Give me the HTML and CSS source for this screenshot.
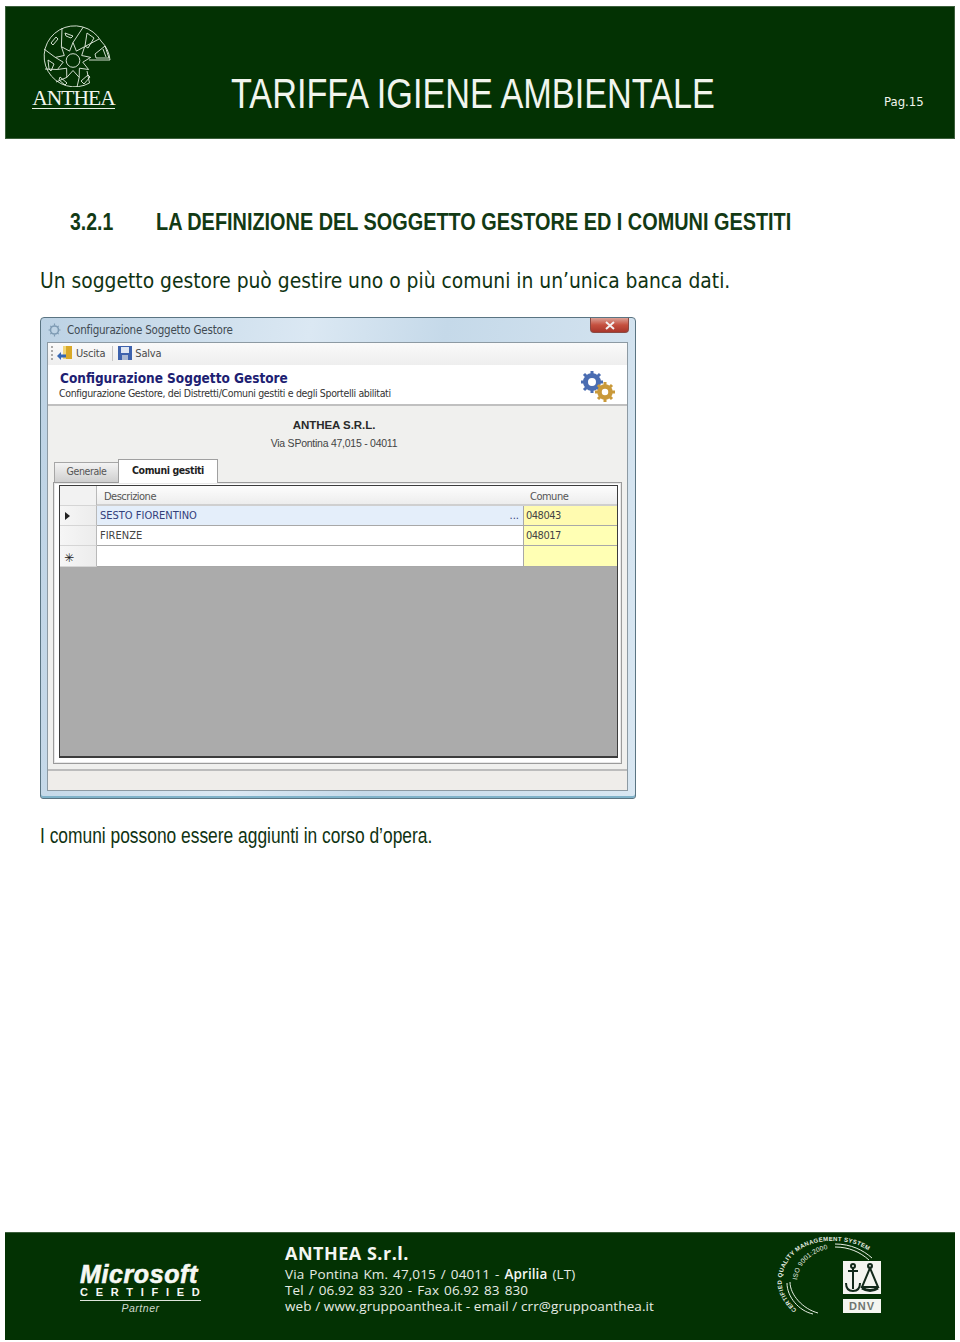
FILE: index.html
```html
<!DOCTYPE html>
<html lang="it">
<head>
<meta charset="utf-8">
<title>Tariffa Igiene Ambientale</title>
<link rel="stylesheet" href="styles.css">
</head>
<body>
<div class="page">
  <header class="banner">
    <div class="brand">
      <svg class="brand-mark" viewBox="0 0 70 62" width="70" height="62" fill="none" stroke="#e8efe4" stroke-width="0.9">
        <path d="M46.500 58 A30.500 30.500 0 1 1 58 16 Q66 24 67 35 L46 35"/>
        <path d="M46.500 58 L44 46"/>
        <circle cx="30" cy="35.500" r="6.800"/>
        <path d="M30 17.500 L33.400 26.100 L41.600 21.700 L38.700 30.500 L47.700 32.400 L39.800 37.200 L45.600 44.500 L36.400 43.200 L36.200 52.400 L30 45.500 L23.800 52.400 L23.600 43.200 L14.400 44.500 L20.200 37.200 L12.300 32.400 L21.300 30.500 L18.400 21.700 L26.600 26.100 Z"/>
        <path d="M30 17.500 L40.300 2 M41.600 21.700 L56 14 M36.200 52.400 L34 62 M23.800 52.400 L13 57 M14.400 44.500 L2 44 M12.300 32.400 L1 24 M18.400 21.700 L19 3"/>
        <path d="M22 8 L30 11 L28 13 L23 11 Z M44 8 L51 13 L45 23 L42 21 Z M52 29 L62 21 L66 33 L53 33 Z M60 24 L63 32 M8 18 L13 12 L15 14 L10 20 Z M5 35 L11 39 L8 46 L6 44 Z M17 52 L24 58 L22 60 L16 55 Z M38 56 L45 50 L47 52 L41 59 Z"/>
      </svg>
      <span class="brand-name">ANTHEA</span>
    </div>
    <h1 class="banner-title"><span class="banner-title-text">TARIFFA IGIENE AMBIENTALE</span></h1>
    <span class="banner-page">Pag.15</span>
  </header>

  <main class="content">
    <h2 class="section-title"><span class="section-num"><span class="section-num-text">3.2.1</span></span><span class="section-text">LA DEFINIZIONE DEL SOGGETTO GESTORE ED I COMUNI GESTITI</span></h2>
    <p class="lead">Un soggetto gestore può gestire uno o più comuni in un’unica banca dati.</p>

    <div class="window">
      <div class="win-title">
        <svg class="win-icon" viewBox="0 0 14 14" width="14" height="14" fill="none" stroke="#7f9cb4" stroke-width="1.600"><circle cx="6.500" cy="7" r="4"/><path d="M6.500 0.500v2M6.500 11.500v2M0.500 7h2M10.500 7h2M2.300 2.800l1.400 1.400M9.300 9.800l1.400 1.400M2.300 11.200l1.400-1.400M9.300 4.200l1.400-1.400" stroke-width="1.200"/></svg>
        <span class="win-title-text">Configurazione Soggetto Gestore</span>
        <span class="win-close">
          <svg viewBox="0 0 12 9" width="12" height="9" fill="none" stroke="#f4f0f0" stroke-width="2"><path d="M2 1l8 7M10 1L2 8"/></svg>
        </span>
      </div>
      <div class="win-client">
        <div class="toolbar">
          <span class="grip"></span>
          <svg class="tool-icon" viewBox="0 0 16 15" width="16" height="15"><rect x="6" y="0" width="9" height="13" fill="#d9a928"/><rect x="6" y="0" width="3" height="13" fill="#f2d77a"/><path d="M0 10l4-4v2.500h5v3H4V14z" fill="#3467b4"/></svg>
          <span class="tool-label">Uscita</span>
          <span class="tool-sep"></span>
          <svg class="tool-icon" viewBox="0 0 14 14" width="14" height="14"><rect width="14" height="14" fill="#3d62ad"/><rect x="3" y="1" width="8" height="6" fill="#dfe7f3"/><rect x="4" y="9" width="6" height="5" fill="#a9b8d3"/></svg>
          <span class="tool-label tool-label-save">Salva</span>
        </div>
        <div class="win-head">
          <div class="win-head-text">
            <div class="win-head-title">Configurazione Soggetto Gestore</div>
            <div class="win-head-sub">Configurazione Gestore, dei Distretti/Comuni gestiti e degli Sportelli abilitati</div>
          </div>
          <svg class="gears" viewBox="0 0 36 32" width="36" height="32" fill="none">
            <circle cx="13" cy="11" r="6.500" stroke="#4a6db2" stroke-width="5"/>
            <path d="M13 0v4M13 18v4M2 11h4M20 11h4M5 3l3 3M18 16l3 3M21 3l-3 3M8 16l-3 3" stroke="#4a6db2" stroke-width="3"/>
            <circle cx="26" cy="21" r="5.500" stroke="#c9993a" stroke-width="4.500"/>
            <path d="M26 11v3M26 28v3M16 21h3M33 21h3M19 14l2 2M31 26l2 2M33 14l-2 2M21 26l-2 2" stroke="#c9993a" stroke-width="3"/>
          </svg>
        </div>
        <div class="company">
          <div class="company-name">ANTHEA S.R.L.</div>
          <div class="company-addr">Via SPontina 47,015 - 04011</div>
        </div>
        <div class="tabs">
          <span class="tab">Generale</span>
          <span class="tab tab-active">Comuni gestiti</span>
        </div>
        <div class="tab-panel">
          <div class="grid">
            <div class="grid-row grid-row-head">
              <div class="cell-mark"></div>
              <div class="cell-name">Descrizione</div>
              <div class="cell-code">Comune</div>
            </div>
            <div class="grid-row grid-row-selected">
              <div class="cell-mark"><span class="arrow"></span></div>
              <div class="cell-name">SESTO FIORENTINO<span class="ellipsis">...</span></div>
              <div class="cell-code">048043</div>
            </div>
            <div class="grid-row">
              <div class="cell-mark"></div>
              <div class="cell-name">FIRENZE</div>
              <div class="cell-code">048017</div>
            </div>
            <div class="grid-row grid-row-new">
              <div class="cell-mark"><span class="star">✳</span></div>
              <div class="cell-name"></div>
              <div class="cell-code"></div>
            </div>
            <div class="grid-empty"></div>
          </div>
        </div>
        <div class="status"></div>
      </div>
    </div>

    <p class="note"><span class="note-text">I comuni possono essere aggiunti in corso d’opera.</span></p>
  </main>

  <footer class="footer">
    <div class="ms">
      <div class="ms-word">Microsoft</div>
      <div class="ms-cert">CERTIFIED</div>
      <div class="ms-partner">Partner</div>
    </div>
    <div class="contact">
      <div class="contact-name">ANTHEA S.r.l.</div>
      <div class="contact-wide">Via Pontina Km. 47,015 / 04011 - <b>Aprilia</b> (LT)</div>
      <div class="contact-wide">Tel / 06.92 83 320 - Fax 06.92 83 830</div>
      <div>web / www.gruppoanthea.it - email / crr@gruppoanthea.it</div>
    </div>
    <svg class="cert" viewBox="0 0 110 84" width="110" height="84">
      <defs>
        <path id="ring-outer" d="M22 77 C10 66 5 54 7 44 C10 22 32 7 58 8 C70 8 82 10 94 18"/>
        <path id="ring-inner" d="M22 47 C24 30 38 17 59 15"/>
      </defs>
      <text class="cert-text"><textPath href="#ring-outer">CERTIFIED QUALITY MANAGEMENT SYSTEM</textPath></text>
      <text class="cert-text cert-text-iso"><textPath href="#ring-inner">ISO 9001:2000</textPath></text>
      <g fill="none" stroke="#e8efe4" stroke-width="1">
        <path d="M15 49 C15 62 28 76 43 80"/>
        <path d="M12 50 C12 64 24 78 38 81"/>
        <path d="M60 14 C74 14 85 19 94 27"/>
        <path d="M60 11 C76 11 88 17 97 25"/>
      </g>
      <rect x="68" y="28" width="38" height="33" fill="#f4f5f0"/>
      <g fill="none" stroke="#12291a" stroke-width="2">
        <circle cx="78" cy="33" r="2"/>
        <path d="M78 35v21M73 38h10M71 50q0 8 7 8q7 0 7-8"/>
        <circle cx="95" cy="33" r="2"/>
        <path d="M95 35l-8 19h16z"/>
        <path d="M87 55q8 5 16 0" stroke-width="3"/>
      </g>
      <rect x="68" y="66" width="38" height="14" fill="#f4f5f0"/>
      <text class="cert-dnv" x="87" y="77" text-anchor="middle">DNV</text>
    </svg>
  </footer>
</div>
</body>
</html>
```
FILE: styles.css
```css
* { box-sizing: border-box; }
html, body { margin: 0; padding: 0; background: #fff; }
body { font-family: "Liberation Sans", Arial, sans-serif; color: #0f3312; }
.page { width: 960px; height: 1342px; padding: 6px 5px 2px; display: flex; flex-direction: column; }

.banner { height: 133px; background: #033203; border: 1px solid #3c5f3c; display: flex; flex: none; color: #f1f5ee; padding-left: 27px; }
.brand { width: 84px; margin-top: 18px; display: flex; flex-direction: column; align-items: center; }
.brand-mark { display: block; margin-left: 6px; }
.brand-name { font: 21.500px/20px "Liberation Serif", serif; letter-spacing: -1px; border-bottom: 1px solid #e8efe4; margin-top: 1px; height: 21px; margin-left: -3px; white-space: nowrap; }
.banner-title { font: 400 42px/1 "Liberation Sans", sans-serif; margin: 66px 0 0 114px; width: 653px; white-space: nowrap; }
.banner-title-text { display: inline-block; transform: scaleX(0.815); transform-origin: left; }
.banner-page { font: 13px/1 Tahoma, "DejaVu Sans Condensed", "DejaVu Sans", sans-serif; margin-top: 88px; }

.content { flex: 1; min-height: 0; padding: 69px 0 0 35px; }
.section-title { margin: 0 0 0 30px; display: flex; font: bold 24px/28px "Liberation Sans", sans-serif; white-space: nowrap; color: #123a14; }
.section-num { width: 86px; flex: none; }
.section-num-text { display: inline-block; transform: scaleX(0.81); transform-origin: left; }
.section-text { display: inline-block; transform: scaleX(0.828); transform-origin: left; }
.lead { margin: 32px 0 0; font: 20.800px/26px "DejaVu Sans Condensed", "DejaVu Sans", sans-serif; white-space: nowrap; }
.note { margin: 24px 0 0; font: 22px/26px "Liberation Sans", sans-serif; white-space: nowrap; }
.note-text { display: inline-block; transform: scaleX(0.79); transform-origin: left; }

.window { width: 596px; height: 482px; margin-top: 23px; padding: 0 7px 7px 6px; border: 1px solid #5a7482; border-radius: 4px 4px 3px 3px; background: linear-gradient(100deg, #bcd2e4 0%, #dbe8f3 40%, #c5d9e9 60%, #d9e7f2 100%); display: flex; flex-direction: column; color: #333; font-family: Tahoma, "DejaVu Sans Condensed", "DejaVu Sans", sans-serif; box-shadow: inset 0 -2px 0 #7fb2c9; }
.win-title { height: 24px; flex: none; display: flex; align-items: center; margin-left: 1px; }
.win-icon { margin-right: 5px; }
.win-title-text { font-size: 11.500px; color: #3f4a52; letter-spacing: -0.200px; }
.win-close { margin-left: auto; margin-top: -9px; margin-right: -1px; width: 39px; height: 15px; background: linear-gradient(#dca095, #c5503f 50%, #a8362b); border: 1px solid #8a4a44; border-top: 0; border-radius: 0 0 4px 4px; display: flex; align-items: center; justify-content: center; }
.win-client { flex: 1; display: flex; flex-direction: column; background: #f0f0ee; border: 1px solid #8d9aa3; min-height: 0; }
.toolbar { height: 22px; flex: none; display: flex; align-items: center; padding: 0 0 2px 3px; background: linear-gradient(#fafafa, #eeeeee); }
.grip { width: 2px; height: 14px; margin-right: 4px; background: repeating-linear-gradient(#a9a9a9 0 2px, transparent 2px 4px); }
.tool-label { font-size: 11px; color: #4a4a4a; margin-left: 3px; letter-spacing: -0.200px; }
.tool-sep { width: 1px; height: 15px; background: #c6c6c6; margin: 0 5px 0 7px; }
.win-head { height: 41px; flex: none; background: #fff; border-bottom: 2px solid #c0c0c0; display: flex; justify-content: space-between; padding: 4px 12px 0; }
.win-head-title { font: bold 13.500px/19px "DejaVu Sans Condensed", "DejaVu Sans", sans-serif; color: #1d2172; }
.win-head-sub { font-size: 10.500px; line-height: 11px; letter-spacing: -0.350px; color: #333; white-space: nowrap; margin-left: -1px; }
.gears { margin-top: 2px; }
.company { height: 53px; flex: none; text-align: center; padding: 12px 0 0; width: 572px; }
.company-name { font: bold 11.500px/15px "Liberation Sans", sans-serif; color: #2a2a2a; letter-spacing: -0.050px; }
.company-addr { font: 10.500px/15px "Liberation Sans", sans-serif; color: #444; margin-top: 3px; letter-spacing: -0.250px; }
.tabs { height: 24px; flex: none; display: flex; align-items: flex-end; padding-left: 6px; position: relative; z-index: 1; margin-bottom: -1px; }
.tab { height: 20px; width: 65px; display: flex; align-items: center; justify-content: center; font-size: 10.500px; letter-spacing: -0.400px; color: #555; background: linear-gradient(#f3f3f3, #cfcfcf); border: 1px solid #a6a6a6; border-bottom: 0; margin-bottom: 1px; padding-bottom: 3px; }
.tab-active { height: 24px; width: 100px; background: #fff; color: #1f1f1f; font-weight: bold; margin: 0 0 0 -1px; border-color: #a0a0a0; }
.tab-panel { height: 282px; width: 569px; flex: none; margin-left: 5px; background: #fff; border: 1px solid #9b9b9b; padding: 2px 4px 0 5px; box-shadow: inset 0 0 0 1px #e8e8e8; }
.grid { width: 559px; height: 273px; border: 1px solid #3c3c3c; display: flex; flex-direction: column; background: #ababab; border-width: 1px 1px 2px 1px; }
.grid-row { height: 20px; flex: none; display: flex; font-size: 11px; color: #444; }
.grid-row-head { height: 20px; color: #555; letter-spacing: -0.500px; }
.grid-row-new { height: 21px; }
.cell-mark { width: 37px; flex: none; background: linear-gradient(90deg, #f6f6f6, #ececec); border-bottom: 1px solid #d5d5d5; border-right: 1px solid #b9b9b9; display: flex; align-items: center; justify-content: center; color: #222; padding: 3px 21px 0 0; }
.star { font: 12px/1 "DejaVu Sans", sans-serif; margin-left: 3px; }
.cell-name { flex: 1; background: #fff; border-bottom: 1px solid #a8a8a8; padding: 3px 4px 0 3px; display: flex; justify-content: space-between; }
.cell-code { width: 94px; flex: none; background: #ffffb4; border-left: 1px solid #a8a8a8; border-bottom: 1px solid #a8a8a8; padding: 3px 0 0 2px; letter-spacing: -0.500px; }
.grid-row-selected .cell-name { background: #e4eefa; color: #33407a; }
.grid-row-selected .cell-code { background: #fffbb0; }
.grid-row-head .cell-name, .grid-row-head .cell-code { background: linear-gradient(#fdfdfd, #ededed); border-left: 0; border-bottom: 2px solid #cfcfcf; padding: 4px 0 0 7px; }
.grid-row-head .cell-mark { background: #f2f2f2; }
.arrow { width: 0; height: 0; border-left: 5px solid #222; border-top: 4.500px solid transparent; border-bottom: 4.500px solid transparent; margin-top: -2px; }
.grid-empty { flex: 1; }
.status { flex: 1; margin-top: 5px; border-top: 2px solid #bcbcbc; background: #efedea; }

.footer { height: 108px; flex: none; background: #033203; border-top: 1px solid #3c5f3c; display: flex; color: #e6ece3; position: relative; padding-left: 75px; }
.ms { width: 205px; padding-top: 30px; }
.ms-word { font: italic bold 25px/23px "Liberation Sans", sans-serif; letter-spacing: 0.600px; -webkit-text-stroke: 0.600px #f6f8f4; color: #f6f8f4; white-space: nowrap; }
.ms-cert { font: bold 11px/12px "Liberation Sans", sans-serif; letter-spacing: 7.700px; border-bottom: 1px solid #dfe6dc; width: 121px; height: 15px; margin-top: 0; color: #f6f8f4; white-space: nowrap; }
.ms-partner { font: italic 10.500px/13px "Liberation Sans", sans-serif; text-align: center; width: 121px; margin-top: 1px; letter-spacing: 0.500px; color: #cfd9cc; }
.contact { font: 13.500px/16px "Open Sans", "Noto Sans", sans-serif; letter-spacing: 0.100px; padding-top: 9px; white-space: nowrap; }
.contact-name { font: bold 18px/22px "Open Sans", "Noto Sans", sans-serif; margin-bottom: 2px; color: #f4f6f2; letter-spacing: 0.500px; }
.contact-wide { word-spacing: 1.400px; }
.contact b { color: #f4f6f2; font-weight: 600; }
.cert { position: absolute; right: 70px; top: 0; }
.cert-text { font: bold 6px "Liberation Sans", sans-serif; fill: #e8efe4; letter-spacing: 0.350px; }
.cert-text-iso { font-weight: normal; font-size: 6.600px; letter-spacing: 0.200px; }
.cert-dnv { font: bold 11px "Liberation Sans", sans-serif; fill: #6f7570; letter-spacing: 1px; }
```
